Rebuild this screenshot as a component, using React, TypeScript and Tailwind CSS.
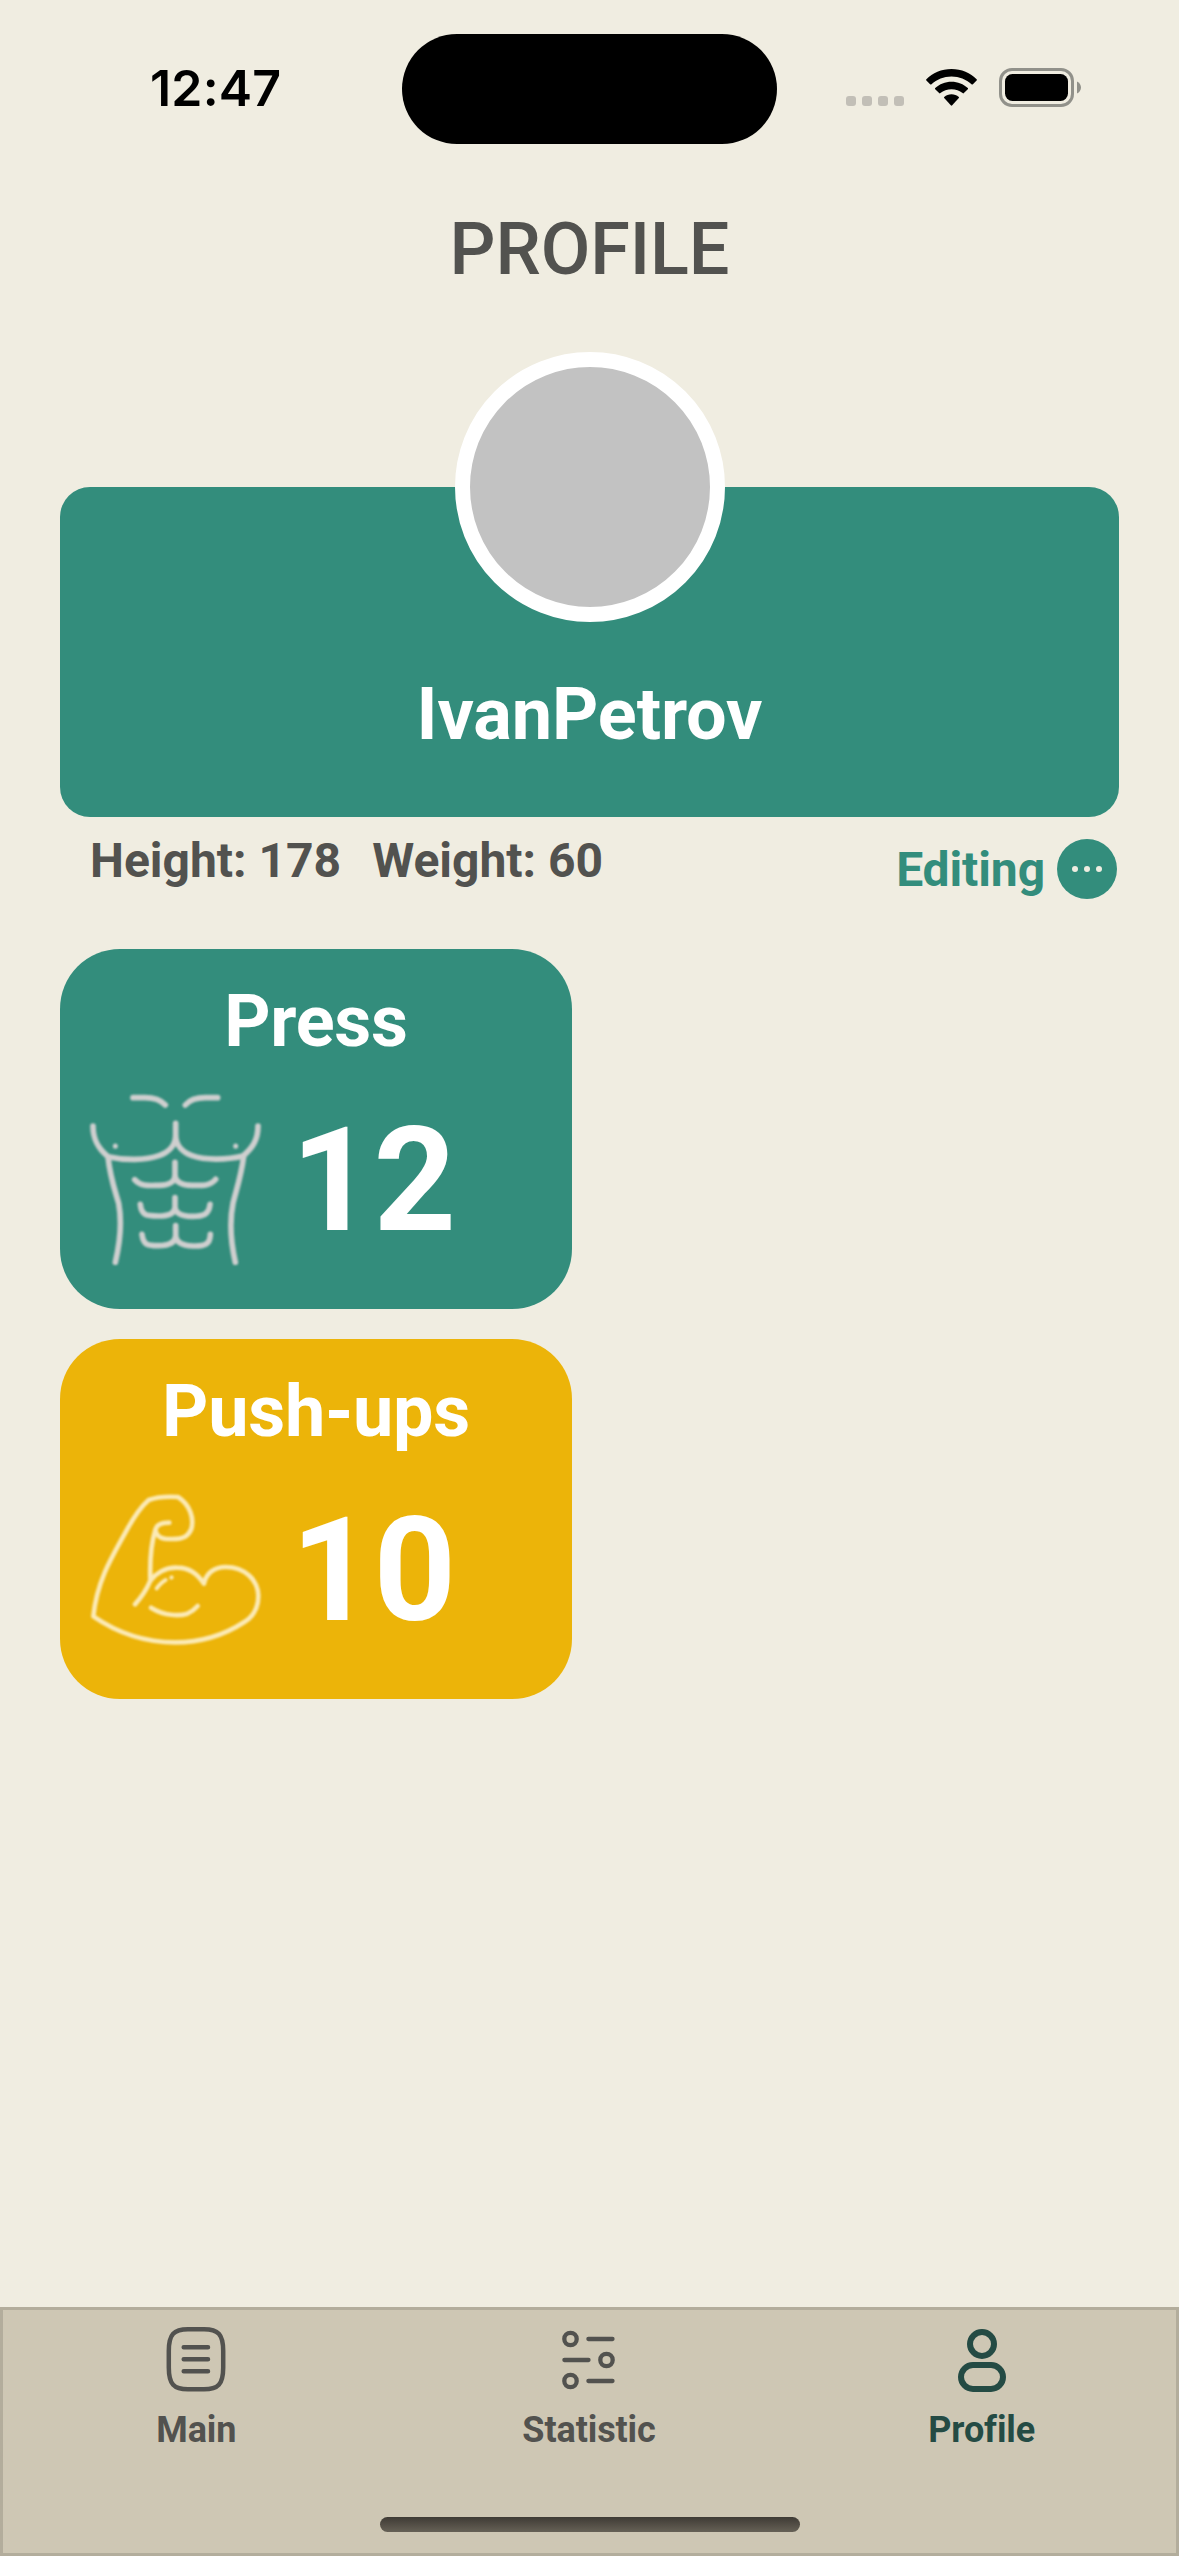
import type { ReactNode } from 'react';

function WifiIcon() {
  return (
    <svg className="mt-[69px] ml-[22px] h-[38px] w-[51px]" viewBox="0 0 51 38">
      <path d="M25.5 0C35.5 0 44.5 4 50.6 10.3Q51.2 11 50.6 11.6L46.9 15.2Q46.2 15.9 45.5 15.2C40.2 10.3 33.2 7.4 25.5 7.4S10.8 10.3 5.5 15.2Q4.8 15.9 4.1 15.2L.4 11.6Q-.2 11 .4 10.3C6.5 4 15.5 0 25.5 0Z" />
      <path d="M25.5 12.7C31.8 12.7 37.5 15.1 41.8 19.1Q42.4 19.7 41.8 20.3L37.9 24.1Q37.2 24.7 36.6 24.1C33.6 21.5 29.7 20.2 25.5 20.2S17.4 21.5 14.4 24.1Q13.8 24.7 13.1 24.1L9.2 20.3Q8.6 19.7 9.2 19.1C13.5 15.1 19.2 12.7 25.5 12.7Z" />
      <path d="M25.5 25.3C28.2 25.3 30.8 26.2 32.8 27.9Q33.3 28.5 32.8 29.1L26.2 36.3Q25.5 37 24.8 36.3L18.2 29.1Q17.7 28.5 18.2 27.9C20.2 26.2 22.8 25.3 25.5 25.3Z" />
    </svg>
  );
}

function BatteryIcon() {
  return (
    <svg className="mt-[68px] ml-[22px] h-[39px] w-[82px]" viewBox="0 0 82 39">
      <rect x="1.5" y="1.5" width="72" height="36" rx="11.5" fill="none" stroke="#91918a" strokeWidth="3" />
      <rect x="6" y="6" width="63" height="27" rx="7.5" />
      <path d="M78 13.5C80.5 14.5 82 17 82 19.5S80.5 24.500 78 25.5Z" fill="#91918a" />
    </svg>
  );
}

function StatusBar() {
  return (
    <header className="flex h-[177px] items-start">
      <div className="mt-[58px] w-[402px] pl-[150px] font-['Inter'] text-[50px] leading-[60px] font-semibold tracking-[0.2px] text-black">
        12:47
      </div>
      <div className="mt-[34px] h-[110px] w-[375px] rounded-[55px] bg-black" />
      <div className="mt-[96px] ml-[69px] flex gap-[6px]">
        {[0, 1, 2, 3].map((dot) => (
          <span key={dot} className="size-[10px] rounded-[3px] bg-[#c2bfb7]" />
        ))}
      </div>
      <WifiIcon />
      <BatteryIcon />
    </header>
  );
}

function TorsoIcon() {
  return (
    <svg
      className="h-[171px] w-[171px] blur-[1px]"
      viewBox="120 462 513 513"
      fill="none"
      stroke="#cfcfcf"
      strokeWidth="17"
      strokeLinecap="round"
      strokeLinejoin="round"
    >
      <path d="M249 473H285C315 473 333 481 346 495" />
      <path d="M503 473H466C437 473 418 481 406 495" />
      <path d="M129 558C129 600 145 626 174 650C228 662 288 661 327 647C356 637 377 616 377 585V550V585C377 616 398 637 426 647C465 661 530 660 579 648C608 623 624 600 624 558" />
      <path d="M174 650C180 710 193 745 206 790C216 845 213 895 196 967" />
      <path d="M581 650C573 710 560 745 549 790C538 845 540 895 556 967" />
      <path d="M254 719C272 740 296 737 327 736C356 735 375 728 375 704V667V704C375 728 396 735 426 736C457 737 481 738 497 718" />
      <path d="M271 793C274 828 291 828 325 828C358 828 375 820 375 800V773V800C375 820 394 828 426 829C460 829 477 824 480 793" />
      <path d="M276 883C280 917 295 917 325 917C358 917 377 907 377 885V857V885C377 907 394 917 430 918C467 919 480 912 481 883" />
      <path d="M196 618V619M557 618V619" strokeWidth="15" />
    </svg>
  );
}

function BicepsIcon() {
  return (
    <svg
      className="h-[151px] w-[171px] blur-[0.8px]"
      viewBox="120 492 513 453"
      fill="none"
      stroke="#fbeab6"
      strokeWidth="14"
      strokeLinecap="round"
      strokeLinejoin="round"
    >
      <path d="M358 578C333 578 319 584 316 600C303 641 299 690 301 752C291 776 275 801 255 823" />
      <path d="M316 600C322 624 338 628 368 627C402 627 414 619 424 597C433 565 420 524 384 501C350 499 320 501 296 510C266 536 244 574 226 608C177 695 140 761 130 859C204 910 287 937 376 937C457 937 528 912 583 876C612 858 625 829 625 797C624 751 585 711 527 711C493 711 468 730 462 761C440 728 417 714 382 713C346 711 317 731 301 752" />
      <path d="M303 833C345 859 388 858 412 851C426 845 435 837 443 828" />
      <path d="M320 775C329 763 337 755 347 750M364 743L365 742" strokeWidth="12" />
    </svg>
  );
}

type ExerciseCardProps = { title: string; value: number; tone: string; icon: ReactNode };

function ExerciseCard({ title, value, tone, icon }: ExerciseCardProps) {
  return (
    <section className={`flex h-[360px] w-[512px] flex-col rounded-[60px] p-[30px] text-white ${tone}`}>
      <h2 className="text-center text-[72px] leading-[85px] font-bold tracking-[-0.3px]">{title}</h2>
      <div className="mt-[30px] flex h-[171px] items-center gap-[30px]">
        {icon}
        <span className="mt-[2px] text-[144px] leading-[170px] font-bold">{value}</span>
      </div>
    </section>
  );
}

function MainIcon() {
  return (
    <svg className="size-[72px]" viewBox="0 0 72 72" fill="none" stroke="currentColor" strokeWidth="4.5" strokeLinecap="round">
      <path d="M8.800 28C8.800 11 14 6.200 28 6.200H44C58 6.200 63.200 11 63.200 28V44.500C63.200 61.500 58 66.300 44 66.300H28C14 66.300 8.800 61.500 8.800 44.500Z" />
      <path d="M23.700 24.300H48M23.700 36.300H48M23.700 48.300H48" />
    </svg>
  );
}

function StatisticIcon() {
  return (
    <svg className="size-[72px]" viewBox="0 0 72 72" fill="none" stroke="currentColor" strokeWidth="4.300" strokeLinecap="round">
      <circle cx="17.500" cy="16" r="6.200" />
      <circle cx="53.500" cy="37" r="6.200" />
      <circle cx="17.500" cy="58" r="6.200" />
      <path d="M35.400 16H59.500M11.400 37H35.500M35.400 58H59.500" />
    </svg>
  );
}

function ProfileIcon() {
  return (
    <svg className="size-[72px]" viewBox="0 0 72 72" fill="none" stroke="currentColor" strokeWidth="6">
      <circle cx="36" cy="21" r="12" />
      <rect x="15" y="42" width="42" height="24" rx="12" />
    </svg>
  );
}

function Tab({ label, icon, active = false }: { label: string; icon: ReactNode; active?: boolean }) {
  return (
    <button
      className={`flex flex-1 flex-col items-center text-[36px] leading-[42px] font-bold tracking-[-0.1px] ${active ? 'text-[#244b44]' : 'text-[#52524f]'}`}
    >
      {icon}
      <span className="mt-[14px]">{label}</span>
    </button>
  );
}

export default function App() {
  return (
    <div className="flex h-[2556px] w-[1179px] flex-col overflow-hidden bg-[#f0ede1] font-['Roboto',sans-serif]">
      <StatusBar />
      <h1 className="mt-[30px] text-center text-[72px] leading-[85px] font-medium tracking-[-0.1px] text-[#52524f]">PROFILE</h1>

      <main className="mx-[60px] mt-[195px] flex-1">
        <section className="flex h-[330px] flex-col items-center rounded-[30px] bg-[#338d7c]">
          <div className="-mt-[135px] size-[270px] rounded-full border-[15px] border-white bg-[#c2c2c2]" />
          <p className="mt-[50px] text-[72px] leading-[85px] font-bold tracking-[-0.1px] text-white">IvanPetrov</p>
        </section>

        <div className="flex items-start pl-[30px] text-[48px] leading-[56px] font-bold text-[#52524f]">
          <span className="mt-[16px]">Height: 178</span>
          <span className="mt-[16px] ml-[31px]">Weight: 60</span>
          <button className="mt-[22px] mr-[2px] ml-auto flex h-[60px] items-center gap-[12px] text-[#338d7c]">
            <span className="mt-[2px] tracking-[-0.1px]">Editing</span>
            <span className="flex size-[60px] items-center justify-center gap-[6px] rounded-full bg-[#338d7c]">
              <i className="size-[6px] rounded-full bg-[#f0ede1]" />
              <i className="size-[6px] rounded-full bg-[#f0ede1]" />
              <i className="size-[6px] rounded-full bg-[#f0ede1]" />
            </span>
          </button>
        </div>

        <div className="mt-[50px] flex flex-col gap-[30px]">
          <ExerciseCard title="Press" value={12} tone="bg-[#338d7c]" icon={<TorsoIcon />} />
          <ExerciseCard title="Push-ups" value={10} tone="bg-[#ecb409]" icon={<BicepsIcon />} />
        </div>
      </main>

      <nav className="flex h-[249px] flex-col items-center justify-between border-[3px] border-[#b3ad9c] bg-[#cec7b4]">
        <div className="flex w-[1179px] pt-[13px] pr-px">
          <Tab label="Main" icon={<MainIcon />} />
          <Tab label="Statistic" icon={<StatisticIcon />} />
          <Tab label="Profile" icon={<ProfileIcon />} active />
        </div>
        <div className="mb-[21px] h-[15px] w-[420px] rounded-full bg-gradient-to-b from-[#3f3b35] to-[#666156]" />
      </nav>
    </div>
  );
}
